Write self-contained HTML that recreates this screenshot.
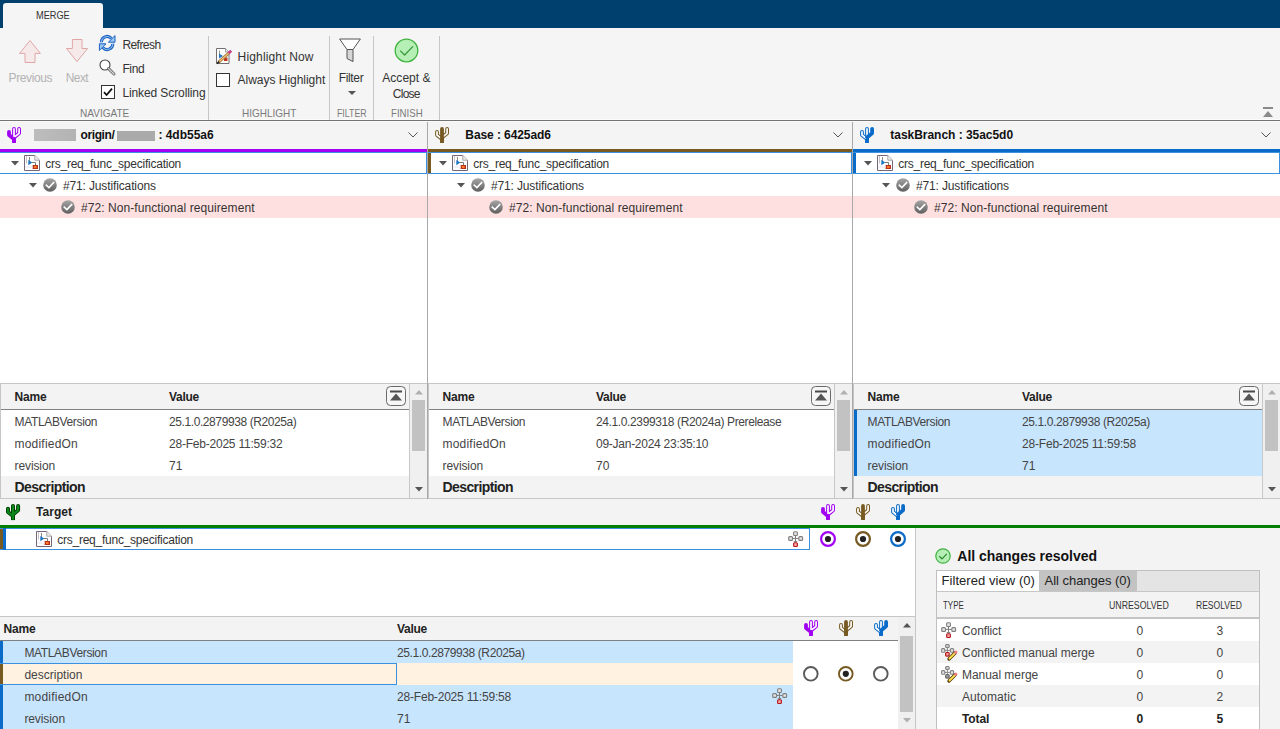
<!DOCTYPE html>
<html><head><meta charset="utf-8">
<style>
*{box-sizing:border-box;margin:0;padding:0}
html,body{width:1280px;height:729px;overflow:hidden;background:#fff;font-family:"Liberation Sans",sans-serif;font-size:12px;color:#333}
.a{position:absolute}
.t{position:absolute;white-space:nowrap;line-height:1}
svg{position:absolute;overflow:visible}
</style></head><body>
<div class="a" style="left:0px;top:0px;width:1280px;height:28px;background:#00406f;"></div>
<div class="a" style="left:3px;top:3px;width:100px;height:25px;background:#f5f5f5;border-radius:3px 3px 0 0"></div>
<div class="t" style="left:36.00px;top:10px;font-size:11.5px;color:#333;transform:scaleX(0.8000);transform-origin:0 0;">MERGE</div>
<div class="a" style="left:0px;top:28px;width:1280px;height:92px;background:#f5f5f5;"></div>
<div class="a" style="left:0px;top:119px;width:1280px;height:1px;background:#fbfbfb;"></div>
<div class="a" style="left:0px;top:120px;width:1280px;height:1px;background:#737373;"></div>
<div class="a" style="left:0px;top:121px;width:1280px;height:1px;background:#fbfbfb;"></div>
<div class="a" style="left:208px;top:36px;width:1px;height:84px;background:#c6c6c6;"></div>
<div class="a" style="left:329px;top:36px;width:1px;height:84px;background:#c6c6c6;"></div>
<div class="a" style="left:373px;top:36px;width:1px;height:84px;background:#c6c6c6;"></div>
<div class="a" style="left:439px;top:36px;width:1px;height:84px;background:#c6c6c6;"></div>
<svg style="left:19px;top:40px;" width="22" height="23" viewBox="0 0 22 23"><path d="M11,0.6 L21.4,13.4 H16 V22.5 H6 V13.4 H0.6 Z" fill="#f6e9e9" stroke="#e0a6a6" stroke-width="1"/></svg>
<svg style="left:66px;top:39px;" width="22" height="23" viewBox="0 0 22 23"><path d="M6.4,0.5 H16 V9.5 H21.6 L11,22.6 L0.4,9.5 H6.4 Z" fill="#f6e9e9" stroke="#e0a6a6" stroke-width="1"/></svg>
<div class="t" style="left:8.60px;top:72px;font-size:12px;color:#b3b3b3;letter-spacing:-0.384px;">Previous</div>
<div class="t" style="left:65.80px;top:72px;font-size:12px;color:#b3b3b3;letter-spacing:-0.613px;">Next</div>
<svg style="left:99px;top:35px;" width="17" height="16" viewBox="0 0 17 16"><path d="M2.4,7.2 A5.7,5.7 0 0 1 12.4,3.4" fill="none" stroke="#1a62c4" stroke-width="3"/><path d="M2.4,7.2 A5.7,5.7 0 0 1 12.4,3.4" fill="none" stroke="#9cc6f0" stroke-width="1"/><path d="M16,0.6 V7.2 H9.4 Z" fill="#9cc6f0" stroke="#1a62c4" stroke-width="1" stroke-linejoin="round"/><path d="M13.8,8.8 A5.7,5.7 0 0 1 3.8,12.6" fill="none" stroke="#1a62c4" stroke-width="3"/><path d="M13.8,8.8 A5.7,5.7 0 0 1 3.8,12.6" fill="none" stroke="#9cc6f0" stroke-width="1"/><path d="M0.4,15.4 V8.8 H7 Z" fill="#9cc6f0" stroke="#1a62c4" stroke-width="1" stroke-linejoin="round"/></svg>
<div class="t" style="left:122.40px;top:39px;font-size:12px;color:#333;letter-spacing:-0.557px;">Refresh</div>
<svg style="left:99px;top:59px;" width="17" height="17" viewBox="0 0 17 17"><circle cx="6" cy="6" r="5" fill="#fff" stroke="#444" stroke-width="1.1"/><path d="M9.6,9.6 L15,15" stroke="#666" stroke-width="3" stroke-linecap="round"/><path d="M9.6,9.6 L15,15" stroke="#ddd" stroke-width="1.2" stroke-linecap="round"/></svg>
<div class="t" style="left:122.40px;top:63px;font-size:12px;color:#333;letter-spacing:-0.357px;">Find</div>
<svg style="left:101px;top:85px;" width="14" height="14" viewBox="0 0 14 14"><rect x="0.5" y="0.5" width="13" height="13" fill="#fff" stroke="#333" stroke-width="1"/><path d="M3,7.2 L5.6,10 L11,3.6" fill="none" stroke="#111" stroke-width="1.8"/></svg>
<div class="t" style="left:122.40px;top:87px;font-size:12px;color:#333;letter-spacing:-0.103px;">Linked Scrolling</div>
<div class="t" style="left:80.00px;top:108px;font-size:11px;color:#7a7a7a;transform:scaleX(0.9133);transform-origin:0 0;">NAVIGATE</div>
<svg style="left:216px;top:47px;" width="17" height="17" viewBox="0 0 17 17"><path d="M0.5,1.5 H9.5 L13,5 V16.5 H0.5 Z" fill="#fff" stroke="#707070" stroke-width="1"/><path d="M9.5,1.5 V5 H13" fill="#eee" stroke="#a0a0a0" stroke-width="1"/><path d="M3.5,3.5 V8" stroke="#999" stroke-width="1"/><path d="M3,6.5 L7,9 L3,11.5 Z" fill="#1f74c4"/><rect x="8" y="10.5" width="3.5" height="3.5" fill="#c0391b"/><path d="M2.4,15.4 L13.2,5.6" stroke="#a77a3a" stroke-width="2.8"/><path d="M2.4,15.4 L13.2,5.6" stroke="#f3c884" stroke-width="1.2"/><path d="M12.6,6.2 L15.2,3.8" stroke="#c83c8c" stroke-width="2.8"/><path d="M1,16.6 L3.2,14.6" stroke="#222" stroke-width="1.6"/></svg>
<div class="t" style="left:237.60px;top:51px;font-size:12px;color:#333;letter-spacing:0.153px;">Highlight Now</div>
<svg style="left:216px;top:73px;" width="14" height="14" viewBox="0 0 14 14"><rect x="0.5" y="0.5" width="13" height="13" fill="#fff" stroke="#333" stroke-width="1"/></svg>
<div class="t" style="left:237.60px;top:74px;font-size:12px;color:#333;letter-spacing:-0.027px;">Always Highlight</div>
<div class="t" style="left:241.90px;top:108px;font-size:11px;color:#7a7a7a;transform:scaleX(0.9090);transform-origin:0 0;">HIGHLIGHT</div>
<svg style="left:339px;top:38px;" width="22" height="25" viewBox="0 0 22 25"><path d="M0.6,1 H21.4 L14,11.5 H8 Z" fill="#fff" stroke="#555" stroke-width="1"/><path d="M8,11.5 H14 V23.6 L8,20.5 Z" fill="#d6d6d6" stroke="#555" stroke-width="1"/></svg>
<div class="t" style="left:338.70px;top:72px;font-size:12px;color:#333;letter-spacing:-0.334px;">Filter</div>
<svg style="left:348px;top:91px;" width="8" height="4" viewBox="0 0 8 4"><path d="M0,0 H8 L4,4 Z" fill="#555"/></svg>
<div class="t" style="left:337.00px;top:108px;font-size:11px;color:#7a7a7a;transform:scaleX(0.7998);transform-origin:0 0;">FILTER</div>
<svg style="left:394px;top:38px;" width="25" height="25" viewBox="0 0 25 25"><circle cx="12.5" cy="12.5" r="11.3" fill="#b6efb6" stroke="#3fb23f" stroke-width="1.3"/><path d="M6.2,12.6 L10.6,17 L19,8.4" fill="none" stroke="#3a9a3a" stroke-width="1.3"/></svg>
<div class="t" style="left:382.30px;top:72px;font-size:12px;color:#333;letter-spacing:0.026px;">Accept &amp;</div>
<div class="t" style="left:392.80px;top:88px;font-size:12px;color:#333;letter-spacing:-0.751px;">Close</div>
<div class="t" style="left:390.80px;top:108px;font-size:11px;color:#7a7a7a;transform:scaleX(0.8778);transform-origin:0 0;">FINISH</div>
<svg style="left:1263px;top:107px;" width="10" height="10" viewBox="0 0 10 10"><rect x="0" y="0" width="10" height="2" fill="#8a8a8a"/><path d="M0,10 L5,4 L10,10 Z" fill="#8a8a8a"/></svg>
<div class="a" style="left:0px;top:122px;width:1280px;height:27px;background:#f4f4f4;"></div>
<div class="a" style="left:0px;top:149px;width:427px;height:3px;background:#a100f2;"></div>
<svg style="left:4px;top:124px;" width="20" height="22" viewBox="0 0 20 22"><path d="M15.1,4.9 V9.3 L10,13.4" fill="none" stroke="#a100f2" stroke-width="3.8" stroke-linecap="round" stroke-linejoin="round"/><path d="M10,4.9 V17" fill="none" stroke="#a100f2" stroke-width="3.8" stroke-linecap="round" stroke-linejoin="round"/><rect x="8.1" y="15" width="3.8" height="4" fill="#a100f2"/><path d="M5,7.8 V11 L10,15" fill="none" stroke="#a100f2" stroke-width="3.8" stroke-linecap="round" stroke-linejoin="round"/><path d="M15.1,4.9 V9.3 L11.2,12.4" fill="none" stroke="#fff" stroke-width="1.7" stroke-linecap="round" stroke-linejoin="round"/><path d="M10,4.9 V12.2" fill="none" stroke="#fff" stroke-width="1.7" stroke-linecap="round" stroke-linejoin="round"/></svg>
<svg style="left:408px;top:132px;" width="10" height="6" viewBox="0 0 10 6"><path d="M0.5,0.5 L5,5 L9.5,0.5" fill="none" stroke="#555" stroke-width="1"/></svg>
<div class="a" style="left:34px;top:129px;width:42px;height:12px;background:linear-gradient(90deg,#bdbdbd,#b3b3b3);"></div>
<div class="t" style="left:80.50px;top:129px;font-size:12px;color:#111;font-weight:bold;letter-spacing:-0.388px;">origin/</div>
<div class="a" style="left:117px;top:131px;width:38px;height:10px;background:#aaaaaa;"></div>
<div class="t" style="left:158.40px;top:129px;font-size:12px;color:#111;font-weight:bold;letter-spacing:-0.011px;">: 4db55a6</div>
<div class="a" style="left:0px;top:152px;width:427px;height:22px;background:#fff;border:1px solid #3c90e0;border-left:none;"></div>
<svg style="left:11px;top:161px;" width="8" height="5" viewBox="0 0 8 5"><path d="M0,0 H8 L4,4.5 Z" fill="#555"/></svg>
<svg style="left:24px;top:155px;" width="16" height="16" viewBox="0 0 16 16"><path d="M0.5,0.5 H10.8 L15.5,5.2 V15.5 H0.5 Z" fill="#fff" stroke="#75687a" stroke-width="1"/><path d="M10.8,0.5 V5.2 H15.5" fill="#f0f0f0" stroke="#a8a8a8" stroke-width="1"/><path d="M2.5,1 V8.5" stroke="#c8c0c8" stroke-width="1"/><path d="M5.5,2 V6" stroke="#8a8a8a" stroke-width="1"/><path d="M4.3,5 L8.3,7.6 L4.3,10.2 Z" fill="#1b74c4"/><path d="M8,7.5 H11.5 V10" fill="none" stroke="#7a7a7a" stroke-width="1"/><rect x="8.6" y="10" width="5.4" height="4" fill="#b8321a"/><rect x="10" y="11" width="2.6" height="2" fill="#ff7b2a"/><path d="M1,12 H9" stroke="#e6e0f0" stroke-width="1"/></svg>
<div class="t" style="left:45.20px;top:158px;font-size:12px;color:#333;letter-spacing:-0.240px;">crs_req_func_specification</div>
<svg style="left:29px;top:183px;" width="8" height="5" viewBox="0 0 8 5"><path d="M0,0 H8 L4,4.5 Z" fill="#555"/></svg>
<svg style="left:43px;top:178px;" width="14" height="14" viewBox="0 0 14 14"><defs><linearGradient id="gg" x1="0" y1="0" x2="0" y2="1"><stop offset="0" stop-color="#a6a6a6"/><stop offset="1" stop-color="#5e5e5e"/></linearGradient></defs><circle cx="7" cy="7" r="6.8" fill="url(#gg)"/><path d="M3.4,7.3 L5.9,9.6 L10.6,4.6" fill="none" stroke="#fff" stroke-width="1.7" stroke-linecap="square"/></svg>
<div class="t" style="left:62.90px;top:180px;font-size:12px;color:#333;letter-spacing:-0.127px;">#71: Justifications</div>
<div class="a" style="left:0px;top:196px;width:427px;height:22px;background:#ffe0e0;"></div>
<svg style="left:61px;top:200px;" width="14" height="14" viewBox="0 0 14 14"><defs><linearGradient id="gg" x1="0" y1="0" x2="0" y2="1"><stop offset="0" stop-color="#a6a6a6"/><stop offset="1" stop-color="#5e5e5e"/></linearGradient></defs><circle cx="7" cy="7" r="6.8" fill="url(#gg)"/><path d="M3.4,7.3 L5.9,9.6 L10.6,4.6" fill="none" stroke="#fff" stroke-width="1.7" stroke-linecap="square"/></svg>
<div class="t" style="left:80.90px;top:202px;font-size:12px;color:#333;letter-spacing:0.073px;">#72: Non-functional requirement</div>
<div class="a" style="left:0px;top:383px;width:427px;height:1px;background:#c6c6c6;"></div>
<div class="a" style="left:0px;top:384px;width:410px;height:25px;background:#f3f3f3;"></div>
<div class="a" style="left:0px;top:409px;width:410px;height:1px;background:#808080;"></div>
<div class="t" style="left:14.50px;top:391px;font-size:12px;color:#222;font-weight:bold;letter-spacing:-0.137px;">Name</div>
<div class="t" style="left:169.00px;top:391px;font-size:12px;color:#222;font-weight:bold;letter-spacing:-0.295px;">Value</div>
<svg style="left:386px;top:386px;" width="20" height="20" viewBox="0 0 20 20"><rect x="0.5" y="0.5" width="19" height="19" rx="4" fill="#f6f6f6" stroke="#6a6a6a" stroke-width="1"/><rect x="4" y="4.5" width="12" height="2" fill="#4a4a4a"/><path d="M4,14.4 L10,7.4 L16,14.4 Z" fill="#555"/></svg>
<div class="t" style="left:14.50px;top:416px;font-size:12px;color:#444;letter-spacing:-0.348px;">MATLABVersion</div>
<div class="t" style="left:169.00px;top:416px;font-size:12px;color:#444;letter-spacing:-0.408px;">25.1.0.2879938 (R2025a)</div>
<div class="t" style="left:14.50px;top:438px;font-size:12px;color:#444;letter-spacing:0.212px;">modifiedOn</div>
<div class="t" style="left:169.00px;top:438px;font-size:12px;color:#444;letter-spacing:-0.221px;">28-Feb-2025 11:59:32</div>
<div class="t" style="left:14.50px;top:460px;font-size:12px;color:#444;letter-spacing:-0.097px;">revision</div>
<div class="t" style="left:169.00px;top:460px;font-size:12px;color:#444;">71</div>
<div class="a" style="left:0px;top:476px;width:410px;height:22px;background:#f3f3f3;"></div>
<div class="t" style="left:14.50px;top:480px;font-size:14px;color:#222;font-weight:bold;letter-spacing:-0.596px;">Description</div>
<div class="a" style="left:0px;top:498px;width:427px;height:1px;background:#c6c6c6;"></div>
<div class="a" style="left:410px;top:384px;width:17px;height:114px;background:#f0f0f0;"></div>
<div class="a" style="left:412px;top:400px;width:13px;height:51px;background:#c2c2c2;"></div>
<svg style="left:414.5px;top:390px;" width="8" height="5" viewBox="0 0 8 5"><path d="M0,4.5 L4,0 L8,4.5 Z" fill="#b0b0b0"/></svg>
<svg style="left:414.5px;top:487px;" width="8" height="5" viewBox="0 0 8 5"><path d="M0,0 L4,4.5 L8,0 Z" fill="#555"/></svg>
<div class="a" style="left:409px;top:384px;width:1px;height:114px;background:#c8c8c8;"></div>
<div class="a" style="left:0px;top:383px;width:1px;height:115px;background:#c6c6c6;"></div>
<div class="a" style="left:427px;top:122px;width:1px;height:377px;background:#a8a8a8;"></div>
<div class="a" style="left:428px;top:149px;width:424px;height:3px;background:#775a22;"></div>
<svg style="left:432px;top:124px;" width="20" height="22" viewBox="0 0 20 22"><path d="M5,7.8 V11 L10,15" fill="none" stroke="#775a22" stroke-width="3.8" stroke-linecap="round" stroke-linejoin="round"/><path d="M15.1,4.9 V9.3 L10,13.4" fill="none" stroke="#775a22" stroke-width="3.8" stroke-linecap="round" stroke-linejoin="round"/><path d="M5,7.8 V11 L8.3,13.7" fill="none" stroke="#fff" stroke-width="1.7" stroke-linecap="round" stroke-linejoin="round"/><path d="M15.1,4.9 V9.3 L11.7,12.1" fill="none" stroke="#fff" stroke-width="1.7" stroke-linecap="round" stroke-linejoin="round"/><path d="M10,4.9 V17" fill="none" stroke="#775a22" stroke-width="3.8" stroke-linecap="round" stroke-linejoin="round"/><rect x="8.1" y="15" width="3.8" height="4" fill="#775a22"/></svg>
<svg style="left:833px;top:132px;" width="10" height="6" viewBox="0 0 10 6"><path d="M0.5,0.5 L5,5 L9.5,0.5" fill="none" stroke="#555" stroke-width="1"/></svg>
<div class="t" style="left:465.30px;top:129px;font-size:12px;color:#111;font-weight:bold;letter-spacing:-0.081px;">Base : 6425ad6</div>
<div class="a" style="left:428px;top:152px;width:424px;height:22px;background:#fff;border:1px solid #3c90e0;"></div>
<div class="a" style="left:428px;top:153px;width:3px;height:20px;background:#775a22;"></div>
<svg style="left:439px;top:161px;" width="8" height="5" viewBox="0 0 8 5"><path d="M0,0 H8 L4,4.5 Z" fill="#555"/></svg>
<svg style="left:452px;top:155px;" width="16" height="16" viewBox="0 0 16 16"><path d="M0.5,0.5 H10.8 L15.5,5.2 V15.5 H0.5 Z" fill="#fff" stroke="#75687a" stroke-width="1"/><path d="M10.8,0.5 V5.2 H15.5" fill="#f0f0f0" stroke="#a8a8a8" stroke-width="1"/><path d="M2.5,1 V8.5" stroke="#c8c0c8" stroke-width="1"/><path d="M5.5,2 V6" stroke="#8a8a8a" stroke-width="1"/><path d="M4.3,5 L8.3,7.6 L4.3,10.2 Z" fill="#1b74c4"/><path d="M8,7.5 H11.5 V10" fill="none" stroke="#7a7a7a" stroke-width="1"/><rect x="8.6" y="10" width="5.4" height="4" fill="#b8321a"/><rect x="10" y="11" width="2.6" height="2" fill="#ff7b2a"/><path d="M1,12 H9" stroke="#e6e0f0" stroke-width="1"/></svg>
<div class="t" style="left:473.20px;top:158px;font-size:12px;color:#333;letter-spacing:-0.240px;">crs_req_func_specification</div>
<svg style="left:457px;top:183px;" width="8" height="5" viewBox="0 0 8 5"><path d="M0,0 H8 L4,4.5 Z" fill="#555"/></svg>
<svg style="left:471px;top:178px;" width="14" height="14" viewBox="0 0 14 14"><defs><linearGradient id="gg" x1="0" y1="0" x2="0" y2="1"><stop offset="0" stop-color="#a6a6a6"/><stop offset="1" stop-color="#5e5e5e"/></linearGradient></defs><circle cx="7" cy="7" r="6.8" fill="url(#gg)"/><path d="M3.4,7.3 L5.9,9.6 L10.6,4.6" fill="none" stroke="#fff" stroke-width="1.7" stroke-linecap="square"/></svg>
<div class="t" style="left:490.90px;top:180px;font-size:12px;color:#333;letter-spacing:-0.127px;">#71: Justifications</div>
<div class="a" style="left:428px;top:196px;width:424px;height:22px;background:#ffe0e0;"></div>
<svg style="left:489px;top:200px;" width="14" height="14" viewBox="0 0 14 14"><defs><linearGradient id="gg" x1="0" y1="0" x2="0" y2="1"><stop offset="0" stop-color="#a6a6a6"/><stop offset="1" stop-color="#5e5e5e"/></linearGradient></defs><circle cx="7" cy="7" r="6.8" fill="url(#gg)"/><path d="M3.4,7.3 L5.9,9.6 L10.6,4.6" fill="none" stroke="#fff" stroke-width="1.7" stroke-linecap="square"/></svg>
<div class="t" style="left:508.90px;top:202px;font-size:12px;color:#333;letter-spacing:0.073px;">#72: Non-functional requirement</div>
<div class="a" style="left:428px;top:383px;width:424px;height:1px;background:#c6c6c6;"></div>
<div class="a" style="left:428px;top:384px;width:407px;height:25px;background:#f3f3f3;"></div>
<div class="a" style="left:428px;top:409px;width:407px;height:1px;background:#808080;"></div>
<div class="t" style="left:442.50px;top:391px;font-size:12px;color:#222;font-weight:bold;letter-spacing:-0.137px;">Name</div>
<div class="t" style="left:596.00px;top:391px;font-size:12px;color:#222;font-weight:bold;letter-spacing:-0.295px;">Value</div>
<svg style="left:811px;top:386px;" width="20" height="20" viewBox="0 0 20 20"><rect x="0.5" y="0.5" width="19" height="19" rx="4" fill="#f6f6f6" stroke="#6a6a6a" stroke-width="1"/><rect x="4" y="4.5" width="12" height="2" fill="#4a4a4a"/><path d="M4,14.4 L10,7.4 L16,14.4 Z" fill="#555"/></svg>
<div class="t" style="left:442.50px;top:416px;font-size:12px;color:#444;letter-spacing:-0.348px;">MATLABVersion</div>
<div class="t" style="left:596.00px;top:416px;font-size:12px;color:#444;letter-spacing:-0.378px;">24.1.0.2399318 (R2024a) Prerelease</div>
<div class="t" style="left:442.50px;top:438px;font-size:12px;color:#444;letter-spacing:0.212px;">modifiedOn</div>
<div class="t" style="left:596.00px;top:438px;font-size:12px;color:#444;letter-spacing:-0.261px;">09-Jan-2024 23:35:10</div>
<div class="t" style="left:442.50px;top:460px;font-size:12px;color:#444;letter-spacing:-0.097px;">revision</div>
<div class="t" style="left:596.00px;top:460px;font-size:12px;color:#444;">70</div>
<div class="a" style="left:428px;top:476px;width:407px;height:22px;background:#f3f3f3;"></div>
<div class="t" style="left:442.50px;top:480px;font-size:14px;color:#222;font-weight:bold;letter-spacing:-0.596px;">Description</div>
<div class="a" style="left:428px;top:498px;width:424px;height:1px;background:#c6c6c6;"></div>
<div class="a" style="left:835px;top:384px;width:17px;height:114px;background:#f0f0f0;"></div>
<div class="a" style="left:837px;top:400px;width:13px;height:51px;background:#c2c2c2;"></div>
<svg style="left:839.5px;top:390px;" width="8" height="5" viewBox="0 0 8 5"><path d="M0,4.5 L4,0 L8,4.5 Z" fill="#b0b0b0"/></svg>
<svg style="left:839.5px;top:487px;" width="8" height="5" viewBox="0 0 8 5"><path d="M0,0 L4,4.5 L8,0 Z" fill="#555"/></svg>
<div class="a" style="left:834px;top:384px;width:1px;height:114px;background:#c8c8c8;"></div>
<div class="a" style="left:428px;top:383px;width:1px;height:115px;background:#c6c6c6;"></div>
<div class="a" style="left:852px;top:122px;width:1px;height:377px;background:#a8a8a8;"></div>
<div class="a" style="left:853px;top:149px;width:427px;height:3px;background:#0b6bc8;"></div>
<svg style="left:857px;top:124px;" width="20" height="22" viewBox="0 0 20 22"><path d="M5,7.8 V11 L10,15" fill="none" stroke="#0b6bc8" stroke-width="3.8" stroke-linecap="round" stroke-linejoin="round"/><path d="M10,4.9 V17" fill="none" stroke="#0b6bc8" stroke-width="3.8" stroke-linecap="round" stroke-linejoin="round"/><rect x="8.1" y="15" width="3.8" height="4" fill="#0b6bc8"/><path d="M5,7.8 V11 L8.7,14" fill="none" stroke="#fff" stroke-width="1.7" stroke-linecap="round" stroke-linejoin="round"/><path d="M10,4.9 V12.4" fill="none" stroke="#fff" stroke-width="1.7" stroke-linecap="round" stroke-linejoin="round"/><path d="M15.1,4.9 V9.3 L10,13.4" fill="none" stroke="#0b6bc8" stroke-width="3.8" stroke-linecap="round" stroke-linejoin="round"/></svg>
<svg style="left:1261px;top:132px;" width="10" height="6" viewBox="0 0 10 6"><path d="M0.5,0.5 L5,5 L9.5,0.5" fill="none" stroke="#555" stroke-width="1"/></svg>
<div class="t" style="left:890.30px;top:129px;font-size:12px;color:#111;font-weight:bold;letter-spacing:-0.033px;">taskBranch : 35ac5d0</div>
<div class="a" style="left:853px;top:152px;width:427px;height:22px;background:#fff;border:1px solid #3c90e0;"></div>
<div class="a" style="left:853px;top:153px;width:3px;height:20px;background:#0b6bc8;"></div>
<svg style="left:864px;top:161px;" width="8" height="5" viewBox="0 0 8 5"><path d="M0,0 H8 L4,4.5 Z" fill="#555"/></svg>
<svg style="left:877px;top:155px;" width="16" height="16" viewBox="0 0 16 16"><path d="M0.5,0.5 H10.8 L15.5,5.2 V15.5 H0.5 Z" fill="#fff" stroke="#75687a" stroke-width="1"/><path d="M10.8,0.5 V5.2 H15.5" fill="#f0f0f0" stroke="#a8a8a8" stroke-width="1"/><path d="M2.5,1 V8.5" stroke="#c8c0c8" stroke-width="1"/><path d="M5.5,2 V6" stroke="#8a8a8a" stroke-width="1"/><path d="M4.3,5 L8.3,7.6 L4.3,10.2 Z" fill="#1b74c4"/><path d="M8,7.5 H11.5 V10" fill="none" stroke="#7a7a7a" stroke-width="1"/><rect x="8.6" y="10" width="5.4" height="4" fill="#b8321a"/><rect x="10" y="11" width="2.6" height="2" fill="#ff7b2a"/><path d="M1,12 H9" stroke="#e6e0f0" stroke-width="1"/></svg>
<div class="t" style="left:898.20px;top:158px;font-size:12px;color:#333;letter-spacing:-0.240px;">crs_req_func_specification</div>
<svg style="left:882px;top:183px;" width="8" height="5" viewBox="0 0 8 5"><path d="M0,0 H8 L4,4.5 Z" fill="#555"/></svg>
<svg style="left:896px;top:178px;" width="14" height="14" viewBox="0 0 14 14"><defs><linearGradient id="gg" x1="0" y1="0" x2="0" y2="1"><stop offset="0" stop-color="#a6a6a6"/><stop offset="1" stop-color="#5e5e5e"/></linearGradient></defs><circle cx="7" cy="7" r="6.8" fill="url(#gg)"/><path d="M3.4,7.3 L5.9,9.6 L10.6,4.6" fill="none" stroke="#fff" stroke-width="1.7" stroke-linecap="square"/></svg>
<div class="t" style="left:915.90px;top:180px;font-size:12px;color:#333;letter-spacing:-0.127px;">#71: Justifications</div>
<div class="a" style="left:853px;top:196px;width:427px;height:22px;background:#ffe0e0;"></div>
<svg style="left:914px;top:200px;" width="14" height="14" viewBox="0 0 14 14"><defs><linearGradient id="gg" x1="0" y1="0" x2="0" y2="1"><stop offset="0" stop-color="#a6a6a6"/><stop offset="1" stop-color="#5e5e5e"/></linearGradient></defs><circle cx="7" cy="7" r="6.8" fill="url(#gg)"/><path d="M3.4,7.3 L5.9,9.6 L10.6,4.6" fill="none" stroke="#fff" stroke-width="1.7" stroke-linecap="square"/></svg>
<div class="t" style="left:933.90px;top:202px;font-size:12px;color:#333;letter-spacing:0.073px;">#72: Non-functional requirement</div>
<div class="a" style="left:853px;top:383px;width:427px;height:1px;background:#c6c6c6;"></div>
<div class="a" style="left:853px;top:384px;width:410px;height:25px;background:#f3f3f3;"></div>
<div class="a" style="left:853px;top:409px;width:410px;height:1px;background:#808080;"></div>
<div class="t" style="left:867.50px;top:391px;font-size:12px;color:#222;font-weight:bold;letter-spacing:-0.137px;">Name</div>
<div class="t" style="left:1022.00px;top:391px;font-size:12px;color:#222;font-weight:bold;letter-spacing:-0.295px;">Value</div>
<svg style="left:1239px;top:386px;" width="20" height="20" viewBox="0 0 20 20"><rect x="0.5" y="0.5" width="19" height="19" rx="4" fill="#f6f6f6" stroke="#6a6a6a" stroke-width="1"/><rect x="4" y="4.5" width="12" height="2" fill="#4a4a4a"/><path d="M4,14.4 L10,7.4 L16,14.4 Z" fill="#555"/></svg>
<div class="a" style="left:854px;top:410px;width:409px;height:66px;background:#c8e5fe;"></div>
<div class="a" style="left:854px;top:410px;width:3px;height:66px;background:#0b6bc8;"></div>
<div class="t" style="left:867.50px;top:416px;font-size:12px;color:#444;letter-spacing:-0.348px;">MATLABVersion</div>
<div class="t" style="left:1022.00px;top:416px;font-size:12px;color:#444;letter-spacing:-0.390px;">25.1.0.2879938 (R2025a)</div>
<div class="t" style="left:867.50px;top:438px;font-size:12px;color:#444;letter-spacing:0.212px;">modifiedOn</div>
<div class="t" style="left:1022.00px;top:438px;font-size:12px;color:#444;letter-spacing:-0.194px;">28-Feb-2025 11:59:58</div>
<div class="t" style="left:867.50px;top:460px;font-size:12px;color:#444;letter-spacing:-0.097px;">revision</div>
<div class="t" style="left:1022.00px;top:460px;font-size:12px;color:#444;">71</div>
<div class="a" style="left:853px;top:476px;width:410px;height:22px;background:#f3f3f3;"></div>
<div class="t" style="left:867.50px;top:480px;font-size:14px;color:#222;font-weight:bold;letter-spacing:-0.596px;">Description</div>
<div class="a" style="left:853px;top:498px;width:427px;height:1px;background:#c6c6c6;"></div>
<div class="a" style="left:1263px;top:384px;width:17px;height:114px;background:#f0f0f0;"></div>
<div class="a" style="left:1265px;top:400px;width:13px;height:51px;background:#c2c2c2;"></div>
<svg style="left:1267.5px;top:390px;" width="8" height="5" viewBox="0 0 8 5"><path d="M0,4.5 L4,0 L8,4.5 Z" fill="#b0b0b0"/></svg>
<svg style="left:1267.5px;top:487px;" width="8" height="5" viewBox="0 0 8 5"><path d="M0,0 L4,4.5 L8,0 Z" fill="#555"/></svg>
<div class="a" style="left:1262px;top:384px;width:1px;height:114px;background:#c8c8c8;"></div>
<div class="a" style="left:853px;top:383px;width:1px;height:115px;background:#c6c6c6;"></div>
<div class="a" style="left:0px;top:499px;width:1280px;height:26px;background:#f3f3f3;"></div>
<div class="a" style="left:0px;top:525px;width:1280px;height:3px;background:#008000;"></div>
<svg style="left:3px;top:501px;" width="20" height="22" viewBox="0 0 20 22"><path d="M5,7.8 V11 L10,15" fill="none" stroke="#003c00" stroke-width="4.0" stroke-linecap="round" stroke-linejoin="round"/><path d="M15.1,4.9 V9.3 L10,13.4" fill="none" stroke="#003c00" stroke-width="4.0" stroke-linecap="round" stroke-linejoin="round"/><path d="M10,4.9 V17" fill="none" stroke="#003c00" stroke-width="4.0" stroke-linecap="round" stroke-linejoin="round"/><rect x="8" y="15" width="4" height="4.1" fill="#003c00"/><path d="M5,7.8 V11 L10,15" fill="none" stroke="#0a8a1a" stroke-width="2.2" stroke-linecap="round" stroke-linejoin="round"/><path d="M15.1,4.9 V9.3 L10,13.4" fill="none" stroke="#0a8a1a" stroke-width="2.2" stroke-linecap="round" stroke-linejoin="round"/><path d="M10,4.9 V18" fill="none" stroke="#0a8a1a" stroke-width="2.2" stroke-linecap="round" stroke-linejoin="round"/></svg>
<div class="t" style="left:36.00px;top:506px;font-size:12px;color:#222;font-weight:bold;letter-spacing:0.043px;">Target</div>
<svg style="left:818px;top:501px;" width="20" height="22" viewBox="0 0 20 22"><path d="M15.1,4.9 V9.3 L10,13.4" fill="none" stroke="#a100f2" stroke-width="3.8" stroke-linecap="round" stroke-linejoin="round"/><path d="M10,4.9 V17" fill="none" stroke="#a100f2" stroke-width="3.8" stroke-linecap="round" stroke-linejoin="round"/><rect x="8.1" y="15" width="3.8" height="4" fill="#a100f2"/><path d="M5,7.8 V11 L10,15" fill="none" stroke="#a100f2" stroke-width="3.8" stroke-linecap="round" stroke-linejoin="round"/><path d="M15.1,4.9 V9.3 L11.2,12.4" fill="none" stroke="#fff" stroke-width="1.7" stroke-linecap="round" stroke-linejoin="round"/><path d="M10,4.9 V12.2" fill="none" stroke="#fff" stroke-width="1.7" stroke-linecap="round" stroke-linejoin="round"/></svg>
<svg style="left:853px;top:501px;" width="20" height="22" viewBox="0 0 20 22"><path d="M5,7.8 V11 L10,15" fill="none" stroke="#775a22" stroke-width="3.8" stroke-linecap="round" stroke-linejoin="round"/><path d="M15.1,4.9 V9.3 L10,13.4" fill="none" stroke="#775a22" stroke-width="3.8" stroke-linecap="round" stroke-linejoin="round"/><path d="M5,7.8 V11 L8.3,13.7" fill="none" stroke="#fff" stroke-width="1.7" stroke-linecap="round" stroke-linejoin="round"/><path d="M15.1,4.9 V9.3 L11.7,12.1" fill="none" stroke="#fff" stroke-width="1.7" stroke-linecap="round" stroke-linejoin="round"/><path d="M10,4.9 V17" fill="none" stroke="#775a22" stroke-width="3.8" stroke-linecap="round" stroke-linejoin="round"/><rect x="8.1" y="15" width="3.8" height="4" fill="#775a22"/></svg>
<svg style="left:888px;top:501px;" width="20" height="22" viewBox="0 0 20 22"><path d="M5,7.8 V11 L10,15" fill="none" stroke="#0b6bc8" stroke-width="3.8" stroke-linecap="round" stroke-linejoin="round"/><path d="M10,4.9 V17" fill="none" stroke="#0b6bc8" stroke-width="3.8" stroke-linecap="round" stroke-linejoin="round"/><rect x="8.1" y="15" width="3.8" height="4" fill="#0b6bc8"/><path d="M5,7.8 V11 L8.7,14" fill="none" stroke="#fff" stroke-width="1.7" stroke-linecap="round" stroke-linejoin="round"/><path d="M10,4.9 V12.4" fill="none" stroke="#fff" stroke-width="1.7" stroke-linecap="round" stroke-linejoin="round"/><path d="M15.1,4.9 V9.3 L10,13.4" fill="none" stroke="#0b6bc8" stroke-width="3.8" stroke-linecap="round" stroke-linejoin="round"/></svg>
<div class="a" style="left:0px;top:528px;width:810px;height:22px;background:#fff;border:1px solid #3c90e0;"></div>
<div class="a" style="left:0px;top:529px;width:3px;height:20px;background:#775a22;"></div>
<div class="a" style="left:3px;top:528px;width:3px;height:22px;background:#0b6bc8;"></div>
<svg style="left:36px;top:531px;" width="16" height="16" viewBox="0 0 16 16"><path d="M0.5,0.5 H10.8 L15.5,5.2 V15.5 H0.5 Z" fill="#fff" stroke="#75687a" stroke-width="1"/><path d="M10.8,0.5 V5.2 H15.5" fill="#f0f0f0" stroke="#a8a8a8" stroke-width="1"/><path d="M2.5,1 V8.5" stroke="#c8c0c8" stroke-width="1"/><path d="M5.5,2 V6" stroke="#8a8a8a" stroke-width="1"/><path d="M4.3,5 L8.3,7.6 L4.3,10.2 Z" fill="#1b74c4"/><path d="M8,7.5 H11.5 V10" fill="none" stroke="#7a7a7a" stroke-width="1"/><rect x="8.6" y="10" width="5.4" height="4" fill="#b8321a"/><rect x="10" y="11" width="2.6" height="2" fill="#ff7b2a"/><path d="M1,12 H9" stroke="#e6e0f0" stroke-width="1"/></svg>
<div class="t" style="left:57.20px;top:534px;font-size:12px;color:#333;letter-spacing:-0.240px;">crs_req_func_specification</div>
<svg style="left:788px;top:531px;" width="16" height="16" viewBox="0 0 16 16"><path d="M7.5,4.5 V10.6 M4.6,7.4 H10.4 M5.8,10.6 H9.2" stroke="#7a7a7a" stroke-width="1" fill="none"/><rect x="5.6" y="0.7" width="3.8" height="3.8" rx="1" fill="#e4e4e4" stroke="#7d7d7d" stroke-width="1.1"/><rect x="0.7" y="5.6" width="3.8" height="3.8" rx="1" fill="#e4e4e4" stroke="#7d7d7d" stroke-width="1.1"/><rect x="10.8" y="5.6" width="3.8" height="3.8" rx="1" fill="#e4e4e4" stroke="#7d7d7d" stroke-width="1.1"/><rect x="5.6" y="11.7" width="3.8" height="3.8" rx="1" fill="#f7a4a4" stroke="#b3161b" stroke-width="1.1"/></svg>
<svg style="left:820px;top:531px;" width="16" height="16" viewBox="0 0 16 16"><circle cx="8" cy="8" r="6.9" fill="#fff" stroke="#a100f2" stroke-width="2.2"/><circle cx="8" cy="8" r="3.1" fill="#222"/></svg>
<svg style="left:855px;top:531px;" width="16" height="16" viewBox="0 0 16 16"><circle cx="8" cy="8" r="6.9" fill="#fff" stroke="#775a22" stroke-width="2.2"/><circle cx="8" cy="8" r="3.1" fill="#222"/></svg>
<svg style="left:890px;top:531px;" width="16" height="16" viewBox="0 0 16 16"><circle cx="8" cy="8" r="6.9" fill="#fff" stroke="#0b6bc8" stroke-width="2.2"/><circle cx="8" cy="8" r="3.1" fill="#222"/></svg>
<div class="a" style="left:0px;top:616px;width:915px;height:1px;background:#c6c6c6;"></div>
<div class="a" style="left:0px;top:617px;width:898px;height:23px;background:#f3f3f3;"></div>
<div class="a" style="left:0px;top:640px;width:898px;height:1px;background:#808080;"></div>
<div class="t" style="left:3.50px;top:623px;font-size:12px;color:#222;font-weight:bold;letter-spacing:-0.137px;">Name</div>
<div class="t" style="left:397.00px;top:623px;font-size:12px;color:#222;font-weight:bold;letter-spacing:-0.295px;">Value</div>
<svg style="left:801px;top:617px;" width="20" height="22" viewBox="0 0 20 22"><path d="M15.1,4.9 V9.3 L10,13.4" fill="none" stroke="#a100f2" stroke-width="3.8" stroke-linecap="round" stroke-linejoin="round"/><path d="M10,4.9 V17" fill="none" stroke="#a100f2" stroke-width="3.8" stroke-linecap="round" stroke-linejoin="round"/><rect x="8.1" y="15" width="3.8" height="4" fill="#a100f2"/><path d="M5,7.8 V11 L10,15" fill="none" stroke="#a100f2" stroke-width="3.8" stroke-linecap="round" stroke-linejoin="round"/><path d="M15.1,4.9 V9.3 L11.2,12.4" fill="none" stroke="#fff" stroke-width="1.7" stroke-linecap="round" stroke-linejoin="round"/><path d="M10,4.9 V12.2" fill="none" stroke="#fff" stroke-width="1.7" stroke-linecap="round" stroke-linejoin="round"/></svg>
<svg style="left:836px;top:617px;" width="20" height="22" viewBox="0 0 20 22"><path d="M5,7.8 V11 L10,15" fill="none" stroke="#775a22" stroke-width="3.8" stroke-linecap="round" stroke-linejoin="round"/><path d="M15.1,4.9 V9.3 L10,13.4" fill="none" stroke="#775a22" stroke-width="3.8" stroke-linecap="round" stroke-linejoin="round"/><path d="M5,7.8 V11 L8.3,13.7" fill="none" stroke="#fff" stroke-width="1.7" stroke-linecap="round" stroke-linejoin="round"/><path d="M15.1,4.9 V9.3 L11.7,12.1" fill="none" stroke="#fff" stroke-width="1.7" stroke-linecap="round" stroke-linejoin="round"/><path d="M10,4.9 V17" fill="none" stroke="#775a22" stroke-width="3.8" stroke-linecap="round" stroke-linejoin="round"/><rect x="8.1" y="15" width="3.8" height="4" fill="#775a22"/></svg>
<svg style="left:871px;top:617px;" width="20" height="22" viewBox="0 0 20 22"><path d="M5,7.8 V11 L10,15" fill="none" stroke="#0b6bc8" stroke-width="3.8" stroke-linecap="round" stroke-linejoin="round"/><path d="M10,4.9 V17" fill="none" stroke="#0b6bc8" stroke-width="3.8" stroke-linecap="round" stroke-linejoin="round"/><rect x="8.1" y="15" width="3.8" height="4" fill="#0b6bc8"/><path d="M5,7.8 V11 L8.7,14" fill="none" stroke="#fff" stroke-width="1.7" stroke-linecap="round" stroke-linejoin="round"/><path d="M10,4.9 V12.4" fill="none" stroke="#fff" stroke-width="1.7" stroke-linecap="round" stroke-linejoin="round"/><path d="M15.1,4.9 V9.3 L10,13.4" fill="none" stroke="#0b6bc8" stroke-width="3.8" stroke-linecap="round" stroke-linejoin="round"/></svg>
<div class="a" style="left:0px;top:641px;width:793px;height:22px;background:#c8e5fe;"></div>
<div class="a" style="left:0px;top:641px;width:3px;height:22px;background:#0b6bc8;"></div>
<div class="a" style="left:0px;top:685px;width:793px;height:22px;background:#c8e5fe;"></div>
<div class="a" style="left:0px;top:685px;width:3px;height:22px;background:#0b6bc8;"></div>
<div class="a" style="left:0px;top:707px;width:793px;height:22px;background:#c8e5fe;"></div>
<div class="a" style="left:0px;top:707px;width:3px;height:22px;background:#0b6bc8;"></div>
<div class="a" style="left:0px;top:663px;width:793px;height:22px;background:#fff2e0;"></div>
<div class="a" style="left:0px;top:663px;width:397px;height:22px;background:transparent;border:1px solid #3c90e0;"></div>
<div class="a" style="left:0px;top:664px;width:3px;height:20px;background:#775a22;"></div>
<div class="t" style="left:24.40px;top:647px;font-size:12px;color:#444;letter-spacing:-0.348px;">MATLABVersion</div>
<div class="t" style="left:397.00px;top:647px;font-size:12px;color:#444;letter-spacing:-0.399px;">25.1.0.2879938 (R2025a)</div>
<div class="t" style="left:24.40px;top:669px;font-size:12px;color:#444;">description</div>
<div class="t" style="left:24.40px;top:691px;font-size:12px;color:#444;letter-spacing:0.212px;">modifiedOn</div>
<div class="t" style="left:397.00px;top:691px;font-size:12px;color:#444;letter-spacing:-0.194px;">28-Feb-2025 11:59:58</div>
<div class="t" style="left:24.40px;top:713px;font-size:12px;color:#444;letter-spacing:-0.097px;">revision</div>
<div class="t" style="left:397.00px;top:713px;font-size:12px;color:#444;">71</div>
<svg style="left:772px;top:688px;" width="16" height="16" viewBox="0 0 16 16"><path d="M7.5,4.5 V10.6 M4.6,7.4 H10.4 M5.8,10.6 H9.2" stroke="#7a7a7a" stroke-width="1" fill="none"/><rect x="5.6" y="0.7" width="3.8" height="3.8" rx="1" fill="#e4e4e4" stroke="#7d7d7d" stroke-width="1.1"/><rect x="0.7" y="5.6" width="3.8" height="3.8" rx="1" fill="#e4e4e4" stroke="#7d7d7d" stroke-width="1.1"/><rect x="10.8" y="5.6" width="3.8" height="3.8" rx="1" fill="#e4e4e4" stroke="#7d7d7d" stroke-width="1.1"/><rect x="5.6" y="11.7" width="3.8" height="3.8" rx="1" fill="#f7a4a4" stroke="#b3161b" stroke-width="1.1"/></svg>
<svg style="left:803.2px;top:666.2px;" width="15.6" height="15.6" viewBox="0 0 15.6 15.6"><circle cx="7.8" cy="7.8" r="6.85" fill="#fff" stroke="#5a5a5a" stroke-width="1.9"/></svg>
<svg style="left:838.2px;top:666.2px;" width="15.6" height="15.6" viewBox="0 0 15.6 15.6"><circle cx="7.8" cy="7.8" r="6.85" fill="#fff" stroke="#775a22" stroke-width="1.9"/><circle cx="7.8" cy="7.8" r="3.1" fill="#222"/></svg>
<svg style="left:873.2px;top:666.2px;" width="15.6" height="15.6" viewBox="0 0 15.6 15.6"><circle cx="7.8" cy="7.8" r="6.85" fill="#fff" stroke="#5a5a5a" stroke-width="1.9"/></svg>
<div class="a" style="left:898px;top:617px;width:17px;height:112px;background:#f0f0f0;"></div>
<div class="a" style="left:900px;top:636px;width:13px;height:76px;background:#c2c2c2;"></div>
<svg style="left:902.5px;top:623px;" width="8" height="5" viewBox="0 0 8 5"><path d="M0,4.5 L4,0 L8,4.5 Z" fill="#555"/></svg>
<svg style="left:902.5px;top:718px;" width="8" height="5" viewBox="0 0 8 5"><path d="M0,0 L4,4.5 L8,0 Z" fill="#b0b0b0"/></svg>
<div class="a" style="left:915px;top:528px;width:1px;height:201px;background:#c6c6c6;"></div>
<div class="a" style="left:916px;top:528px;width:364px;height:201px;background:#f3f3f3;"></div>
<svg style="left:935px;top:548px;" width="16" height="16" viewBox="0 0 16 16"><circle cx="8" cy="8" r="7.2" fill="#b6efb6" stroke="#3fb23f" stroke-width="1.2"/><path d="M4.3,8.2 L7,10.8 L11.8,5.8" fill="none" stroke="#2e8b2e" stroke-width="1.2"/></svg>
<div class="t" style="left:957.30px;top:549px;font-size:14px;color:#111;font-weight:bold;letter-spacing:-0.016px;">All changes resolved</div>
<div class="a" style="left:936px;top:570px;width:324px;height:159px;background:#fff;border:1px solid #c0c0c0;border-bottom:none;"></div>
<div class="a" style="left:937px;top:571px;width:102px;height:20px;background:#fff;"></div>
<div class="a" style="left:1039px;top:571px;width:98px;height:20px;background:#c3c3c3;"></div>
<div class="a" style="left:1137px;top:571px;width:122px;height:20px;background:#e4e4e4;"></div>
<div class="t" style="left:941.50px;top:574px;font-size:13px;color:#222;letter-spacing:0.060px;">Filtered view (0)</div>
<div class="t" style="left:1044.50px;top:574px;font-size:13px;color:#222;letter-spacing:-0.027px;">All changes (0)</div>
<div class="a" style="left:937px;top:591px;width:322px;height:1px;background:#c6c6c6;"></div>
<div class="a" style="left:937px;top:592px;width:322px;height:25px;background:#f3f3f3;"></div>
<div class="a" style="left:937px;top:617px;width:322px;height:2px;background:#c4c4c4;"></div>
<div class="t" style="left:943.20px;top:601px;font-size:10px;color:#333;transform:scaleX(0.7940);transform-origin:0 0;">TYPE</div>
<div class="t" style="left:1108.60px;top:601px;font-size:10px;color:#333;transform:scaleX(0.8772);transform-origin:0 0;">UNRESOLVED</div>
<div class="t" style="left:1195.70px;top:601px;font-size:10px;color:#333;transform:scaleX(0.8542);transform-origin:0 0;">RESOLVED</div>
<div class="t" style="left:962.00px;top:625px;font-size:12px;color:#444;letter-spacing:-0.097px;">Conflict</div>
<div class="t" style="left:1136.40px;top:625px;font-size:12px;color:#444;">0</div>
<div class="t" style="left:1216.50px;top:625px;font-size:12px;color:#444;">3</div>
<svg style="left:941px;top:622px;" width="16" height="16" viewBox="0 0 16 16"><path d="M7.5,4.5 V10.6 M4.6,7.4 H10.4 M5.8,10.6 H9.2" stroke="#7a7a7a" stroke-width="1" fill="none"/><rect x="5.6" y="0.7" width="3.8" height="3.8" rx="1" fill="#e4e4e4" stroke="#7d7d7d" stroke-width="1.1"/><rect x="0.7" y="5.6" width="3.8" height="3.8" rx="1" fill="#e4e4e4" stroke="#7d7d7d" stroke-width="1.1"/><rect x="10.8" y="5.6" width="3.8" height="3.8" rx="1" fill="#e4e4e4" stroke="#7d7d7d" stroke-width="1.1"/><rect x="5.6" y="11.7" width="3.8" height="3.8" rx="1" fill="#f7a4a4" stroke="#b3161b" stroke-width="1.1"/></svg>
<div class="a" style="left:937px;top:641px;width:322px;height:22px;background:#f3f3f3;"></div>
<div class="t" style="left:962.00px;top:647px;font-size:12px;color:#444;letter-spacing:-0.033px;">Conflicted manual merge</div>
<div class="t" style="left:1136.40px;top:647px;font-size:12px;color:#444;">0</div>
<div class="t" style="left:1216.50px;top:647px;font-size:12px;color:#444;">0</div>
<svg style="left:941px;top:644px;" width="17" height="17" viewBox="0 0 17 17"><path d="M6.4,3 V8 M3.6,6.4 H9.4" stroke="#8a8a8a" stroke-width="1" fill="none"/><rect x="4.6" y="0.6" width="3.6" height="2.8" rx="1" fill="#e6e6e6" stroke="#808080" stroke-width="1.1"/><rect x="0.6" y="4.6" width="3.2" height="3.6" rx="1" fill="#e6e6e6" stroke="#808080" stroke-width="1.1"/><rect x="9.4" y="4.6" width="3.2" height="3.6" rx="1" fill="#e6e6e6" stroke="#808080" stroke-width="1.1"/><rect x="4.6" y="8.5" width="3.6" height="3.6" rx="1" fill="#f6a0a0" stroke="#b01818" stroke-width="1.2"/><path d="M8,15 L14.2,8.8" stroke="#5a3a10" stroke-width="3.4" stroke-linecap="round"/><path d="M8,15 L14.2,8.8" stroke="#ffe44a" stroke-width="1.8"/><path d="M13.6,9.4 L15.8,7.2" stroke="#f08080" stroke-width="2.6"/></svg>
<div class="t" style="left:962.00px;top:669px;font-size:12px;color:#444;letter-spacing:-0.048px;">Manual merge</div>
<div class="t" style="left:1136.40px;top:669px;font-size:12px;color:#444;">0</div>
<div class="t" style="left:1216.50px;top:669px;font-size:12px;color:#444;">0</div>
<svg style="left:941px;top:666px;" width="17" height="17" viewBox="0 0 17 17"><path d="M6.4,3 V8 M3.6,6.4 H9.4" stroke="#8a8a8a" stroke-width="1" fill="none"/><rect x="4.6" y="0.6" width="3.6" height="2.8" rx="1" fill="#e6e6e6" stroke="#808080" stroke-width="1.1"/><rect x="0.6" y="4.6" width="3.2" height="3.6" rx="1" fill="#e6e6e6" stroke="#808080" stroke-width="1.1"/><rect x="9.4" y="4.6" width="3.2" height="3.6" rx="1" fill="#e6e6e6" stroke="#808080" stroke-width="1.1"/><rect x="4.6" y="8.5" width="3.6" height="3.6" rx="1" fill="#9a9a9a" stroke="#6a6a6a" stroke-width="1.2"/><path d="M8,15 L14.2,8.8" stroke="#5a3a10" stroke-width="3.4" stroke-linecap="round"/><path d="M8,15 L14.2,8.8" stroke="#ffe44a" stroke-width="1.8"/><path d="M13.6,9.4 L15.8,7.2" stroke="#f08080" stroke-width="2.6"/></svg>
<div class="a" style="left:937px;top:685px;width:322px;height:22px;background:#f3f3f3;"></div>
<div class="t" style="left:962.00px;top:691px;font-size:12px;color:#444;letter-spacing:0.081px;">Automatic</div>
<div class="t" style="left:1136.40px;top:691px;font-size:12px;color:#444;">0</div>
<div class="t" style="left:1216.50px;top:691px;font-size:12px;color:#444;">2</div>
<div class="t" style="left:962.00px;top:713px;font-size:12px;color:#222;font-weight:bold;letter-spacing:-0.110px;">Total</div>
<div class="t" style="left:1136.40px;top:713px;font-size:12px;color:#222;font-weight:bold;">0</div>
<div class="t" style="left:1216.50px;top:713px;font-size:12px;color:#222;font-weight:bold;">5</div>
</body></html>
